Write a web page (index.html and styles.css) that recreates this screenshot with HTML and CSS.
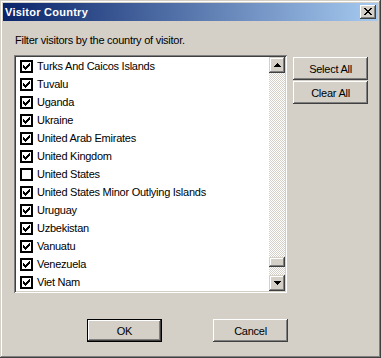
FILE: index.html
```html
<!DOCTYPE html>
<html lang="en">
<head>
    <meta charset="UTF-8">
    <meta name="viewport" content="width=device-width, initial-scale=1.0">
    <title>Visitor Country</title>
    <link rel="stylesheet" href="styles.css">
</head>
<body>
    <div class="dialog">
        <div class="titlebar">
            <span class="title">Visitor Country</span>
            <button class="close-btn" title="Close">
                <svg width="8" height="7" viewBox="0 0 8 7" shape-rendering="crispEdges">
                    <path d="M0 0h2v1H0zM6 0h2v1H6zM1 1h2v1H1zM5 1h2v1H5zM2 2h4v1H2zM3 3h2v1H3zM2 4h4v1H2zM1 5h2v1H1zM5 5h2v1H5zM0 6h2v1H0zM6 6h2v1H6z" fill="#000"/>
                </svg>
            </button>
        </div>

        <div class="content">
            <p class="hint">Filter visitors by the country of visitor.</p>

            <div class="main-row">
                <div class="listbox">
                    <div class="list" id="country-list"></div>
                    <div class="scrollbar">
                        <div class="sb-btn">
                            <svg width="7" height="4" viewBox="0 0 7 4" shape-rendering="crispEdges"><path d="M3 0h1v1H3zM2 1h3v1H2zM1 2h5v1H1zM0 3h7v1H0z" fill="#000"/></svg>
                        </div>
                        <div class="sb-track">
                            <div class="sb-thumb"></div>
                        </div>
                        <div class="sb-btn">
                            <svg width="7" height="4" viewBox="0 0 7 4" shape-rendering="crispEdges"><path d="M0 0h7v1H0zM1 1h5v1H1zM2 2h3v1H2zM3 3h1v1H3z" fill="#000"/></svg>
                        </div>
                    </div>
                </div>

                <div class="side-buttons">
                    <button class="btn">Select All</button>
                    <button class="btn">Clear All</button>
                </div>
            </div>

            <div class="bottom-row">
                <button class="btn default">OK</button>
                <button class="btn">Cancel</button>
            </div>
        </div>
    </div>

    <script>
        const countries = [
            ['Turks And Caicos Islands', true],
            ['Tuvalu', true],
            ['Uganda', true],
            ['Ukraine', true],
            ['United Arab Emirates', true],
            ['United Kingdom', true],
            ['United States', false],
            ['United States Minor Outlying Islands', true],
            ['Uruguay', true],
            ['Uzbekistan', true],
            ['Vanuatu', true],
            ['Venezuela', true],
            ['Viet Nam', true]
        ];

        const tick = '<svg width="7" height="7" viewBox="0 0 7 7" shape-rendering="crispEdges">' +
            '<path d="M0 2h1v3H0zM1 3h1v3H1zM2 4h1v3H2zM3 3h1v3H3zM4 2h1v3H4zM5 1h1v3H5zM6 0h1v3H6z" fill="#000"/></svg>';

        document.getElementById('country-list').innerHTML = countries.map(([name, checked]) => `
            <div class="row">
                <span class="check">${checked ? tick : ''}</span>
                <span class="label">${name}</span>
            </div>
        `).join('');
    </script>
</body>
</html>
```

FILE: styles.css
```css
body {
    margin: 0;
    font-family: "Liberation Sans", Arial, sans-serif;
    font-size: 11px;
    letter-spacing: -0.25px;
    color: #000000;
    background-color: #d4d0c8;
}
.dialog {
    width: 381px;
    height: 358px;
    box-sizing: border-box;
    padding: 3px;
    background-color: #d4d0c8;
    box-shadow: inset -1px -1px #404040, inset 1px 1px #d4d0c8,
                inset -2px -2px #808080, inset 2px 2px #ffffff;
    display: flex;
    flex-direction: column;
}
.titlebar {
    height: 18px;
    display: flex;
    align-items: center;
    justify-content: space-between;
    padding: 0 2px 0 2px;
    background: linear-gradient(to right, #0a246a, #a6caf0);
}
.title {
    color: #ffffff;
    font-weight: bold;
    font-size: 11px;
    letter-spacing: 0.25px;
    line-height: 18px;
}
.close-btn {
    width: 16px;
    height: 14px;
    padding: 0;
    border: none;
    background-color: #d4d0c8;
    display: flex;
    align-items: center;
    justify-content: center;
    box-shadow: inset -1px -1px #404040, inset 1px 1px #ffffff,
                inset -2px -2px #808080, inset 2px 2px #d4d0c8;
}
.close-btn svg {
    display: block;
    margin-top: -1px;
}
.content {
    flex: 1;
    display: flex;
    flex-direction: column;
    padding: 13px 0 0 11px;
}
.hint {
    margin: 0 0 8px 1px;
    line-height: 13px;
}
.main-row {
    display: flex;
    gap: 6px;
    align-items: flex-start;
}
.listbox {
    width: 273px;
    height: 238px;
    box-sizing: border-box;
    padding: 2px;
    background-color: #ffffff;
    box-shadow: inset 1px 1px #808080, inset -1px -1px #ffffff,
                inset 2px 2px #404040, inset -2px -2px #d4d0c8;
    display: flex;
}
.list {
    flex: 1;
    overflow: hidden;
}
.row {
    height: 18px;
    display: flex;
    align-items: center;
    padding-left: 4px;
    white-space: nowrap;
}
.check {
    width: 13px;
    height: 13px;
    box-sizing: border-box;
    border: 2px solid #000000;
    background-color: #ffffff;
    display: flex;
    align-items: center;
    justify-content: center;
    margin-right: 4px;
}
.check svg {
    display: block;
}
.label {
    line-height: 18px;
}
.scrollbar {
    width: 16px;
    display: flex;
    flex-direction: column;
}
.sb-btn {
    width: 16px;
    height: 16px;
    background-color: #d4d0c8;
    display: flex;
    align-items: center;
    justify-content: center;
    box-shadow: inset -1px -1px #404040, inset 1px 1px #d4d0c8,
                inset -2px -2px #808080, inset 2px 2px #ffffff;
}
.sb-btn svg {
    display: block;
}
.sb-track {
    flex: 1;
    position: relative;
    background: repeating-conic-gradient(#ffffff 0 25%, #d4d0c8 0 50%) 0 0 / 2px 2px;
}
.sb-thumb {
    position: absolute;
    left: 0;
    right: 0;
    top: 184px;
    height: 10px;
    background-color: #d4d0c8;
    box-shadow: inset -1px -1px #404040, inset 1px 1px #d4d0c8,
                inset -2px -2px #808080, inset 2px 2px #ffffff;
}
.side-buttons {
    display: flex;
    flex-direction: column;
    gap: 1px;
    margin-top: 2px;
}
.btn {
    width: 75px;
    height: 23px;
    padding: 0;
    border: none;
    font-family: "Liberation Sans", Arial, sans-serif;
    font-size: 11px;
    letter-spacing: -0.25px;
    color: #000000;
    background-color: #d4d0c8;
    box-shadow: inset -1px -1px #404040, inset 1px 1px #ffffff,
                inset -2px -2px #808080, inset 2px 2px #d4d0c8;
}
.btn.default {
    box-shadow: inset 0 0 0 1px #000000,
                inset -2px -2px #404040, inset 2px 2px #ffffff,
                inset -3px -3px #808080;
}
.bottom-row {
    display: flex;
    gap: 51px;
    margin: 26px 0 0 73px;
}
```
